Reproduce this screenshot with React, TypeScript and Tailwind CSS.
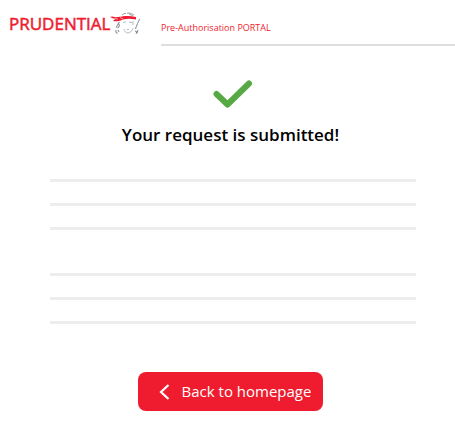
function Logo() {
  return (
    <div className="flex w-[132px] shrink-0 items-start text-[#ee1c2e]">
      <span className="text-[17px] font-medium leading-6 [-webkit-text-stroke:0.5px_#ee1c2e]">PRUDENTIAL</span>
      <svg viewBox="0 0 31 24" className="h-6 w-[31px] shrink-0" fill="none" aria-hidden="true">
        <path d="M0 5 2 4.500l4 .8 6-.7C16 3.800 21 4 26 5v2.500c-5-1-9-1.200-13 0C10 9 7 9.800 3 9l2-1.800Z" fill="#ee1c2e" />
        <path d="M4 6.500 8 7M10 5.500l3 1.500" stroke="#fff" strokeWidth=".6" />
        <path d="M12 3c1-1 3-2 4-1.500M17 1.200c3-.5 5 .5 7 2M19 2l4 2" stroke="#8b949a" strokeWidth=".9" />
        <path d="M9.500 10c-2 2-2 4-3.500 5.500M8.500 12c2 1 .5 3-1 4M6 18c-.5 2 0 3 1.500 3.500M8 18l1 2" stroke="#8b949a" strokeWidth="1.100" />
        <path d="M13 10.500l3-.6M19 10l3 .7M14 17c0 2 2 4 4 4 3-1 5-3 5-5M17 17.500h2M23 9v4" stroke="#a2a9ae" strokeWidth=".8" />
        <path d="M29.500 7c-1 3-3 6-4 10M25 19l2 1-1 2M28 18l-1 3" stroke="#7d878e" strokeWidth="1" />
      </svg>
    </div>
  );
}

function PlaceholderLines() {
  return (
    <div className="flex flex-col gap-[21px]" aria-hidden="true">
      <div className="h-[3px] bg-[#ededed]" />
      <div className="h-[3px] bg-[#ededed]" />
      <div className="h-[3px] bg-[#ededed]" />
    </div>
  );
}

export default function App() {
  return (
    <div className="min-h-screen bg-white font-['Open_Sans',sans-serif]">
      <header className="flex items-start gap-5 pl-[9px] pt-3">
        <Logo />
        <div className="min-w-0 flex-1 border-b-2 border-[#dedede] pb-[6px] pt-[6px]">
          <p className="text-[9px] leading-5 text-[#ee1c2e]">Pre-Authorisation PORTAL</p>
        </div>
      </header>
      <main className="flex flex-col items-center pl-[6px] pt-[34px]">
        <svg viewBox="0 0 44 28" className="h-7 w-11" fill="none" stroke="#57a943" strokeWidth="6" strokeLinecap="round" strokeLinejoin="round" aria-hidden="true">
          <path d="M7.500 14 18.500 24.500 40 3.500" />
        </svg>
        <h1 className="mt-[15px] text-[17px] font-semibold leading-6 text-black">Your request is submitted!</h1>
        <div className="mt-8 flex w-full flex-col gap-[43px] pl-11 pr-[39px]">
          <PlaceholderLines />
          <PlaceholderLines />
        </div>
        <button type="button" className="mt-12 flex h-[39px] cursor-pointer items-center gap-3 rounded-lg bg-[#ee1c2e] pl-5 pr-3 text-[15px] text-white">
          <svg viewBox="0 0 12 18" className="h-[18px] w-3" fill="none" stroke="currentColor" strokeWidth="2.200" aria-hidden="true">
            <path d="M10.500 2 3 9l7.500 7" />
          </svg>
          Back to homepage
        </button>
      </main>
    </div>
  );
}
